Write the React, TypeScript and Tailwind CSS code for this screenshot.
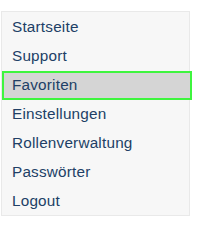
import React from "react";

const items = ["Startseite", "Support", "Favoriten", "Einstellungen", "Rollenverwaltung", "Passwörter", "Logout"];

export default function App() {
  return (
    <div className="w-[200px] h-[225px] bg-white pt-[11px] pl-[1px]" style={{ fontFamily: '"Liberation Sans", Arial, sans-serif' }}>
      <div className="w-[189px] h-[205px] border border-[#e9e9e9] bg-[#f7f7f7] pt-[1px]">
        {items.map((t) =>
          t === "Favoriten" ? (
            <div key={t} className="h-[29px] mr-[-3px] flex items-center pl-[8px] bg-[#d5d5d5] border-2 border-[#3ef53e] text-[15.3px] tracking-[0.2px] text-[#213f66]">
              {t}
            </div>
          ) : (
            <div key={t} className="h-[29px] flex items-center pl-[10px] text-[15.3px] tracking-[0.2px] text-[#213f66]">
              {t}
            </div>
          )
        )}
      </div>
    </div>
  );
}
